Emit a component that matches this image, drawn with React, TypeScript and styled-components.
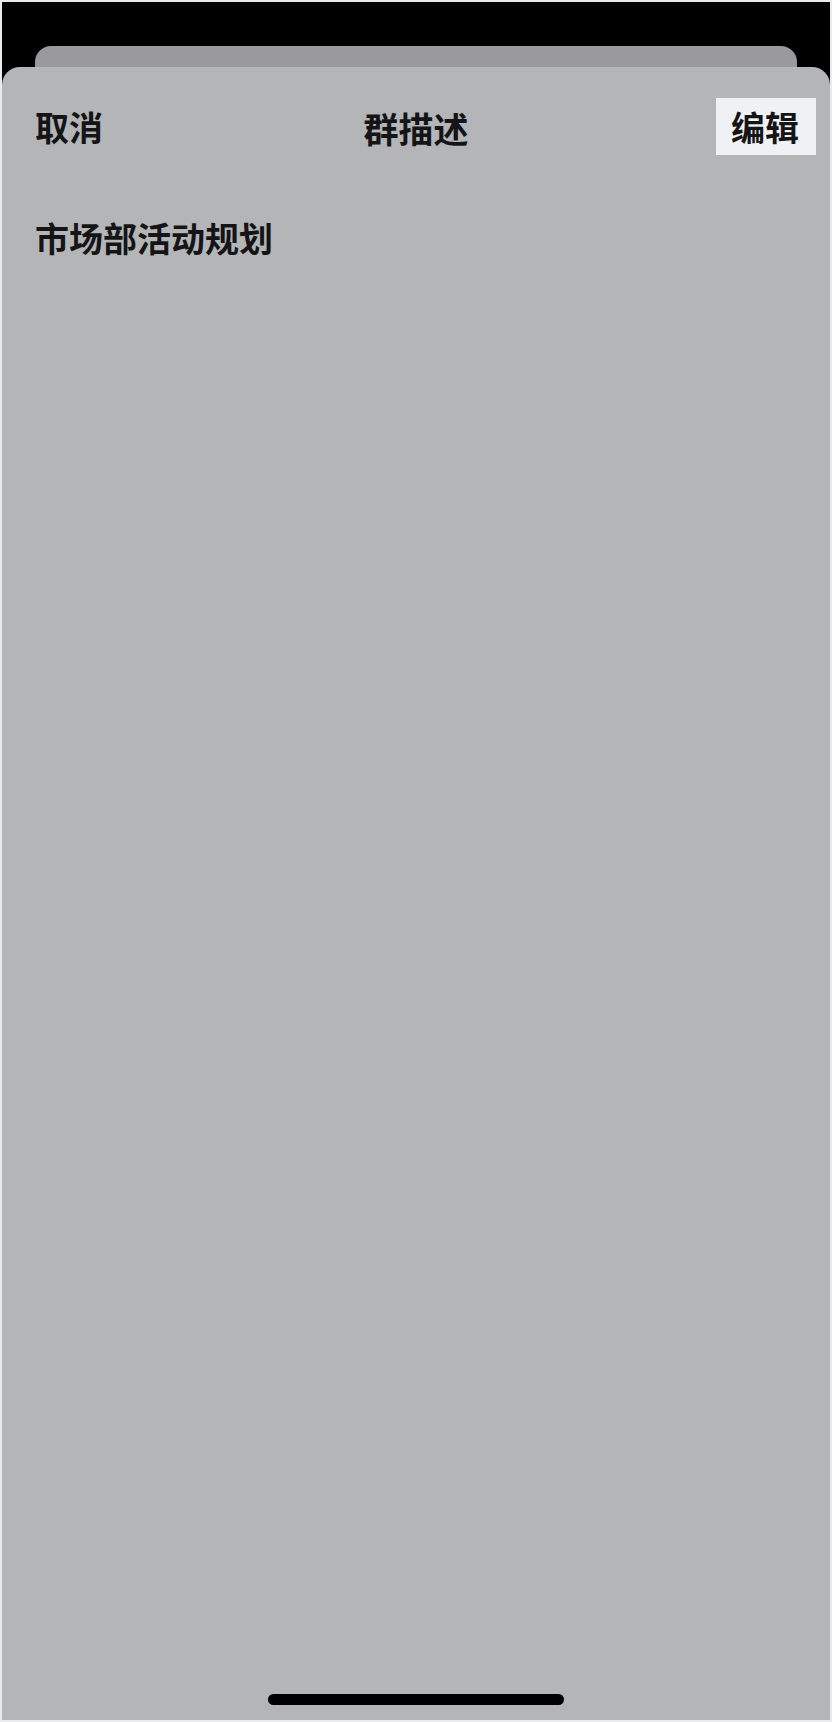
import React from "react";
import styled, { createGlobalStyle } from "styled-components";

const GlobalStyle = createGlobalStyle`
  html, body {
    margin: 0;
    padding: 0;
    background: #ebebeb;
  }
  * { box-sizing: border-box; }
`;

const Screen = styled.div`
  width: 832px;
  height: 1722px;
  border: 2px solid #ebebeb;
  background: #000;
  display: flex;
  flex-direction: column;
  font-family: "Noto Sans CJK SC", "Noto Sans", sans-serif;
  color: #151517;
`;

const BackSheet = styled.div`
  height: 21px;
  margin: 44px 33px 0;
  background: #9a9a9c;
  border-radius: 16px 16px 0 0;
  flex-shrink: 0;
`;

const Sheet = styled.div`
  flex: 1;
  background: #b4b5b7;
  border-radius: 18px 18px 0 0;
  display: flex;
  flex-direction: column;
`;

const NavBar = styled.div`
  display: grid;
  grid-template-columns: 1fr auto 1fr;
  align-items: center;
  padding: 31px 14px 0;
`;

const NavButton = styled.button<{ $filled?: boolean }>`
  justify-self: ${(p) => (p.$filled ? "end" : "start")};
  margin-left: ${(p) => (p.$filled ? "0" : "19px")};
  font: inherit;
  font-size: 34px;
  font-weight: 600;
  line-height: 1;
  color: inherit;
  border: none;
  background: ${(p) => (p.$filled ? "#f0f1f4" : "transparent")};
  height: 57px;
  padding: ${(p) => (p.$filled ? "0 17px 0 15px" : "0")};
  display: flex;
  align-items: center;
  cursor: pointer;
`;

const Title = styled.div`
  font-size: 35px;
  font-weight: 600;
  line-height: 1;
  margin-top: 1px;
`;

const Description = styled.div`
  margin: 66px 0 0 33px;
  font-size: 34px;
  font-weight: 600;
  line-height: 1;
`;

const Spacer = styled.div`
  flex: 1;
`;

const HomeIndicator = styled.div`
  width: 296px;
  height: 11px;
  margin: 0 auto 15px;
  border-radius: 6px;
  background: #000;
`;

export default function App() {
  return (
    <>
      <GlobalStyle />
      <Screen>
        <BackSheet />
        <Sheet>
          <NavBar>
            <NavButton>取消</NavButton>
            <Title>群描述</Title>
            <NavButton $filled>编辑</NavButton>
          </NavBar>
          <Description>市场部活动规划</Description>
          <Spacer />
          <HomeIndicator />
        </Sheet>
      </Screen>
    </>
  );
}
